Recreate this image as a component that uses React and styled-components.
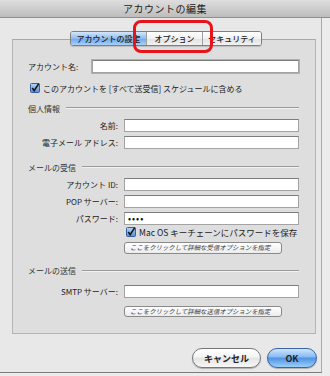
import React from "react";
import styled, { createGlobalStyle } from "styled-components";

const GlobalStyle = createGlobalStyle`
  body {
    margin: 0;
    background: #ececec;
    font-family: "Noto Sans CJK JP", "Liberation Sans", sans-serif;
  }
`;

const Screen = styled.div`
  position: relative;
  width: 330px;
  height: 376px;
  overflow: hidden;
  background: #ececec;
`;

const TitleBar = styled.div`
  height: 17px;
  display: flex;
  align-items: center;
  justify-content: center;
  background: linear-gradient(#dedede, #bdbdbd);
  border-bottom: 1px solid #8e8e8e;
  font-size: 10px;
  color: #222;
  letter-spacing: 0.5px;
`;

const Body = styled.div`
  width: 322px;
  height: 355px;
  background: #e8e8e8;
  border-right: 1px solid #a9a9a9;
  border-bottom: 1px solid #7c7c7c;
  display: flex;
  flex-direction: column;
  padding-top: 13px;
  box-sizing: border-box;
`;

const Tabs = styled.div`
  display: flex;
  margin-left: 70px;
  height: 13px;
  border: 1px solid #7f7f7f;
  border-radius: 3px;
  width: fit-content;
  position: relative;
  z-index: 1;
  box-shadow: 0 1px 1px rgba(0, 0, 0, 0.15);
`;

const Tab = styled.div`
  width: ${(p) => p.w}px;
  display: flex;
  align-items: center;
  justify-content: center;
  font-size: 8px;
  font-weight: 500;
  color: #222;
  background: ${(p) =>
    p.active
      ? "linear-gradient(#d4e6fb, #8fbcf0 50%, #6ea6ea 51%, #a8d0f8)"
      : "linear-gradient(#ffffff, #f1f1f1 50%, #e2e2e2 51%, #f2f2f2)"};
  border-left: ${(p) => (p.first ? "none" : "1px solid #a0a0a0")};
  border-radius: ${(p) => (p.first ? "2px 0 0 2px" : p.last ? "0 2px 2px 0" : "0")};
`;

const Panel = styled.div`
  margin: -7px 5px 0 12px;
  background: #dedede;
  border: 1px solid #b4b4b4;
  border-top-color: #a8a8a8;
  display: flex;
  flex-direction: column;
  padding: 20px 16px 16px 0;
  height: 295px;
  box-sizing: border-box;
`;

const Row = styled.div`
  display: flex;
  align-items: center;
  height: 13px;
  margin-top: ${(p) => p.mt || 0}px;
`;

const Label = styled.div`
  width: ${(p) => (p.wide ? 58 : 105)}px;
  padding-left: ${(p) => (p.wide ? 15 : 0)}px;
  margin-right: 6px;
  text-align: ${(p) => (p.wide ? "left" : "right")};
  font-size: 8px;
  color: #222;
  white-space: nowrap;
  flex-shrink: 0;
`;

const Input = styled.div`
  flex: 1;
  height: 13px;
  box-sizing: border-box;
  background: #fff;
  border: 1px solid #a3a3a3;
  border-top-color: #7d7d7d;
  box-shadow: ${(p) => (p.focus ? "0 0 0 1px #8fb5e8" : "none")};
  font-size: 9px;
  line-height: 11px;
  padding-left: 3px;
  color: #111;
  letter-spacing: 1px;
`;

const CheckRow = styled.div`
  display: flex;
  align-items: center;
  gap: 3px;
  height: 10px;
  margin-top: ${(p) => p.mt || 0}px;
  margin-left: ${(p) => p.ml}px;
  font-size: ${(p) => p.fs || 8}px;
  color: #222;
  white-space: nowrap;
`;

const Section = styled.div`
  display: flex;
  align-items: center;
  height: 10px;
  margin-top: ${(p) => p.mt || 0}px;
  padding-left: 15px;
  font-size: 8px;
  color: #333;
  white-space: nowrap;
  &::after {
    content: "";
    flex: 1;
    height: 1px;
    margin-left: 6px;
    background: #9a9a9a;
    border-bottom: 1px solid #f2f2f2;
  }
`;

const DetailButton = styled.div`
  width: 158px;
  height: 13px;
  box-sizing: border-box;
  margin-left: 111px;
  margin-top: ${(p) => p.mt || 0}px;
  border: 1px solid #8a8a8a;
  border-radius: 3px;
  background: linear-gradient(#ffffff, #ececec);
  font-size: 6.4px;
  font-style: italic;
  color: #333;
  display: flex;
  align-items: center;
  padding-left: 5px;
  white-space: nowrap;
`;

const Footer = styled.div`
  display: flex;
  justify-content: flex-end;
  gap: 6px;
  padding-right: 4px;
  margin-top: 14px;
`;

const PillButton = styled.div`
  width: ${(p) => p.w}px;
  height: 20px;
  box-sizing: border-box;
  border-radius: 10px;
  display: flex;
  align-items: center;
  justify-content: center;
  font-size: 9px;
  font-weight: 700;
  color: #222;
  border: 1px solid ${(p) => (p.primary ? "#3a64a4" : "#777")};
  background: ${(p) =>
    p.primary
      ? "linear-gradient(#d0e6fb, #84b9f1 45%, #4e92e4 50%, #9ccff9)"
      : "linear-gradient(#ffffff, #f4f4f4 45%, #e4e4e4 50%, #f7f7f7)"};
  box-shadow: 0 1px 1px rgba(0, 0, 0, 0.25);
`;

const Highlight = styled.div`
  position: absolute;
  left: 133px;
  top: 20px;
  width: 80px;
  height: 33px;
  box-sizing: border-box;
  border: 3px solid #e8141b;
  border-radius: 8px;
  z-index: 2;
`;

const Check = () => (
  <svg width="10" height="10" viewBox="0 0 10 10">
    <defs>
      <linearGradient id="cb" x1="0" y1="0" x2="0" y2="1">
        <stop offset="0" stopColor="#b9d6f6" />
        <stop offset="1" stopColor="#4f8fdd" />
      </linearGradient>
    </defs>
    <rect x="0.5" y="0.5" width="9" height="9" rx="1" fill="url(#cb)" stroke="#35609c" />
    <path d="M2.3 5 L4.2 7.6 L8.8 0.6" fill="none" stroke="#111" strokeWidth="1.6" />
  </svg>
);

const FormRow = ({ label, mt, value, wide, focus }) => (
  <Row mt={mt}>
    <Label wide={wide}>{label}</Label>
    <Input focus={focus}>{value}</Input>
  </Row>
);

export default function App() {
  return (
    <Screen>
      <GlobalStyle />
      <TitleBar>アカウントの編集</TitleBar>
      <Body>
        <Tabs>
          <Tab w={75} active first>
            アカウントの設定
          </Tab>
          <Tab w={55}>オプション</Tab>
          <Tab w={58} last>
            セキュリティ
          </Tab>
        </Tabs>
        <Panel>
          <FormRow label="アカウント名:" wide focus />
          <CheckRow mt={10} ml={17}>
            <Check />
            このアカウントを [すべて送受信] スケジュールに含める
          </CheckRow>
          <Section mt={10}>個人情報</Section>
          <FormRow label="名前:" mt={6} />
          <FormRow label="電子メール アドレス:" mt={4} />
          <Section mt={13}>メールの受信</Section>
          <FormRow label="アカウント ID:" mt={6} />
          <FormRow label="POP サーバー:" mt={4} />
          <FormRow label="パスワード:" mt={4} value="••••" />
          <CheckRow mt={2} ml={113} fs={8.5}>
            <Check />
            Mac OS キーチェーンにパスワードを保存
          </CheckRow>
          <DetailButton mt={5}>ここをクリックして詳細な受信オプションを指定</DetailButton>
          <Section mt={12}>メールの送信</Section>
          <FormRow label="SMTP サーバー:" mt={9} />
          <DetailButton mt={8}>ここをクリックして詳細な送信オプションを指定</DetailButton>
        </Panel>
        <Footer>
          <PillButton w={69}>キャンセル</PillButton>
          <PillButton w={50} primary>
            OK
          </PillButton>
        </Footer>
      </Body>
      <Highlight />
    </Screen>
  );
}
